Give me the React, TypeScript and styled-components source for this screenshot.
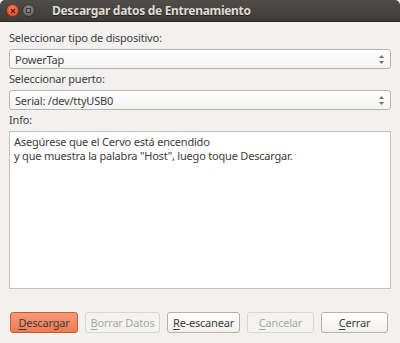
import React from "react";
import styled, { createGlobalStyle } from "styled-components";

const Global = createGlobalStyle`
  html, body { margin: 0; padding: 0; background: #f2f1f0; }
  body { width: 400px; height: 343px; overflow: hidden; font-family: "Noto Sans", "DejaVu Sans", sans-serif; }
`;

const Window = styled.div`
  width: 400px;
  height: 343px;
  display: flex;
  flex-direction: column;
  background: #f2f1f0;
  color: #3c3c3c;
  font-size: 11px;
  letter-spacing: -0.2px;
`;

const TitleBar = styled.div`
  height: 22px;
  flex: none;
  display: flex;
  align-items: center;
  padding-left: 6px;
  background: linear-gradient(#4e4d49, #3d3c38);
  border-bottom: 1px solid #2a2926;
  border-radius: 5px 5px 0 0;
  box-sizing: border-box;
`;

const WinButton = styled.div<{ $close?: boolean }>`
  width: 13px;
  height: 13px;
  border-radius: 50%;
  margin-right: 3px;
  display: flex;
  align-items: center;
  justify-content: center;
  background: ${(p) =>
    p.$close
      ? "radial-gradient(circle at 50% 35%, #f47e57, #dd4a1e)"
      : "radial-gradient(circle at 50% 35%, #8b8a85, #5e5d59)"};
  border: 1px solid ${(p) => (p.$close ? "#8c2f12" : "#33322f")};
  box-sizing: border-box;
`;

const Title = styled.div`
  margin-left: 14px;
  color: #dfdbd2;
  font-weight: bold;
  font-size: 12px;
  letter-spacing: -0.3px;
  text-shadow: 0 1px 0 #222;
`;

const Body = styled.div`
  flex: 1;
  display: flex;
  flex-direction: column;
  padding: 7px 9px 10px 9px;
`;

const Label = styled.div<{ $top: number }>`
  height: 17px;
  line-height: 17px;
  margin-top: ${(p) => p.$top}px;
  margin-bottom: 3px;
`;

const Combo = styled.div`
  height: 18px;
  border: 1px solid #b6b4ae;
  border-radius: 3px;
  background: linear-gradient(#ffffff, #f3f3f2);
  display: flex;
  align-items: center;
  justify-content: space-between;
  padding: 0 6px 0 5px;
  box-sizing: content-box;
`;

const Arrows = styled.div`
  display: flex;
  flex-direction: column;
  gap: 3px;
`;

const TextArea = styled.div`
  height: 150px;
  border: 1px solid #c3c1bd;
  background: #ffffff;
  padding: 3px 4px;
  line-height: 14px;
  white-space: pre-wrap;
  box-sizing: content-box;
`;

const ButtonRow = styled.div`
  margin-top: 23px;
  display: flex;
  gap: 7px;
  padding-left: 1px;
`;

type Kind = "suggested" | "normal" | "disabled";

const Btn = styled.div<{ $kind: Kind; $w: number }>`
  width: ${(p) => p.$w}px;
  height: 21px;
  box-sizing: border-box;
  border-radius: 3px;
  display: flex;
  align-items: center;
  justify-content: center;
  border: 1px solid
    ${(p) => (p.$kind === "suggested" ? "#c45a36" : p.$kind === "disabled" ? "#d8d6d2" : "#b3b1ac")};
  background: ${(p) =>
    p.$kind === "suggested"
      ? "linear-gradient(#f79a78, #ef7b54)"
      : p.$kind === "disabled"
      ? "#f3f3f2"
      : "linear-gradient(#ffffff, #f1f0ef)"};
  color: ${(p) => (p.$kind === "disabled" ? "#a8a7a4" : "#3c3c3c")};
  u { text-decoration-thickness: 1px; text-underline-offset: 2px; }
`;

const Arrow = ({ up }: { up?: boolean }) => (
  <svg width="5" height="3" viewBox="0 0 5 3">
    <path d={up ? "M0 3 L2.5 0 L5 3 Z" : "M0 0 L2.5 3 L5 0 Z"} fill="#6e6e6c" />
  </svg>
);

export default function App() {
  return (
    <Window>
      <Global />
      <TitleBar>
        <WinButton $close>
          <svg width="6" height="6" viewBox="0 0 6 6">
            <path d="M1 1 L5 5 M5 1 L1 5" stroke="#5a1a08" strokeWidth="1.2" />
          </svg>
        </WinButton>
        <WinButton>
          <svg width="5" height="5" viewBox="0 0 5 5">
            <rect x="0.5" y="0.5" width="4" height="4" fill="none" stroke="#3a3936" strokeWidth="1" />
          </svg>
        </WinButton>
        <Title>Descargar datos de Entrenamiento</Title>
      </TitleBar>
      <Body>
        <Label $top={0}>Seleccionar tipo de dispositivo:</Label>
        <Combo>
          <span>PowerTap</span>
          <Arrows>
            <Arrow up />
            <Arrow />
          </Arrows>
        </Combo>
        <Label $top={1}>Seleccionar puerto:</Label>
        <Combo>
          <span>Serial: /dev/ttyUSB0</span>
          <Arrows>
            <Arrow up />
            <Arrow />
          </Arrows>
        </Combo>
        <Label $top={1}>Info:</Label>
        <TextArea>
          {"Asegúrese que el Cervo está encendido\ny que muestra la palabra \"Host\", luego toque Descargar."}
        </TextArea>
        <ButtonRow>
          <Btn $kind="suggested" $w={68}>
            <span><u>D</u>escargar</span>
          </Btn>
          <Btn $kind="disabled" $w={75}>
            <span><u>B</u>orrar Datos</span>
          </Btn>
          <Btn $kind="normal" $w={73}>
            <span><u>R</u>e-escanear</span>
          </Btn>
          <Btn $kind="disabled" $w={67}>
            <span><u>C</u>ancelar</span>
          </Btn>
          <Btn $kind="normal" $w={67}>
            <span><u>C</u>errar</span>
          </Btn>
        </ButtonRow>
      </Body>
    </Window>
  );
}
